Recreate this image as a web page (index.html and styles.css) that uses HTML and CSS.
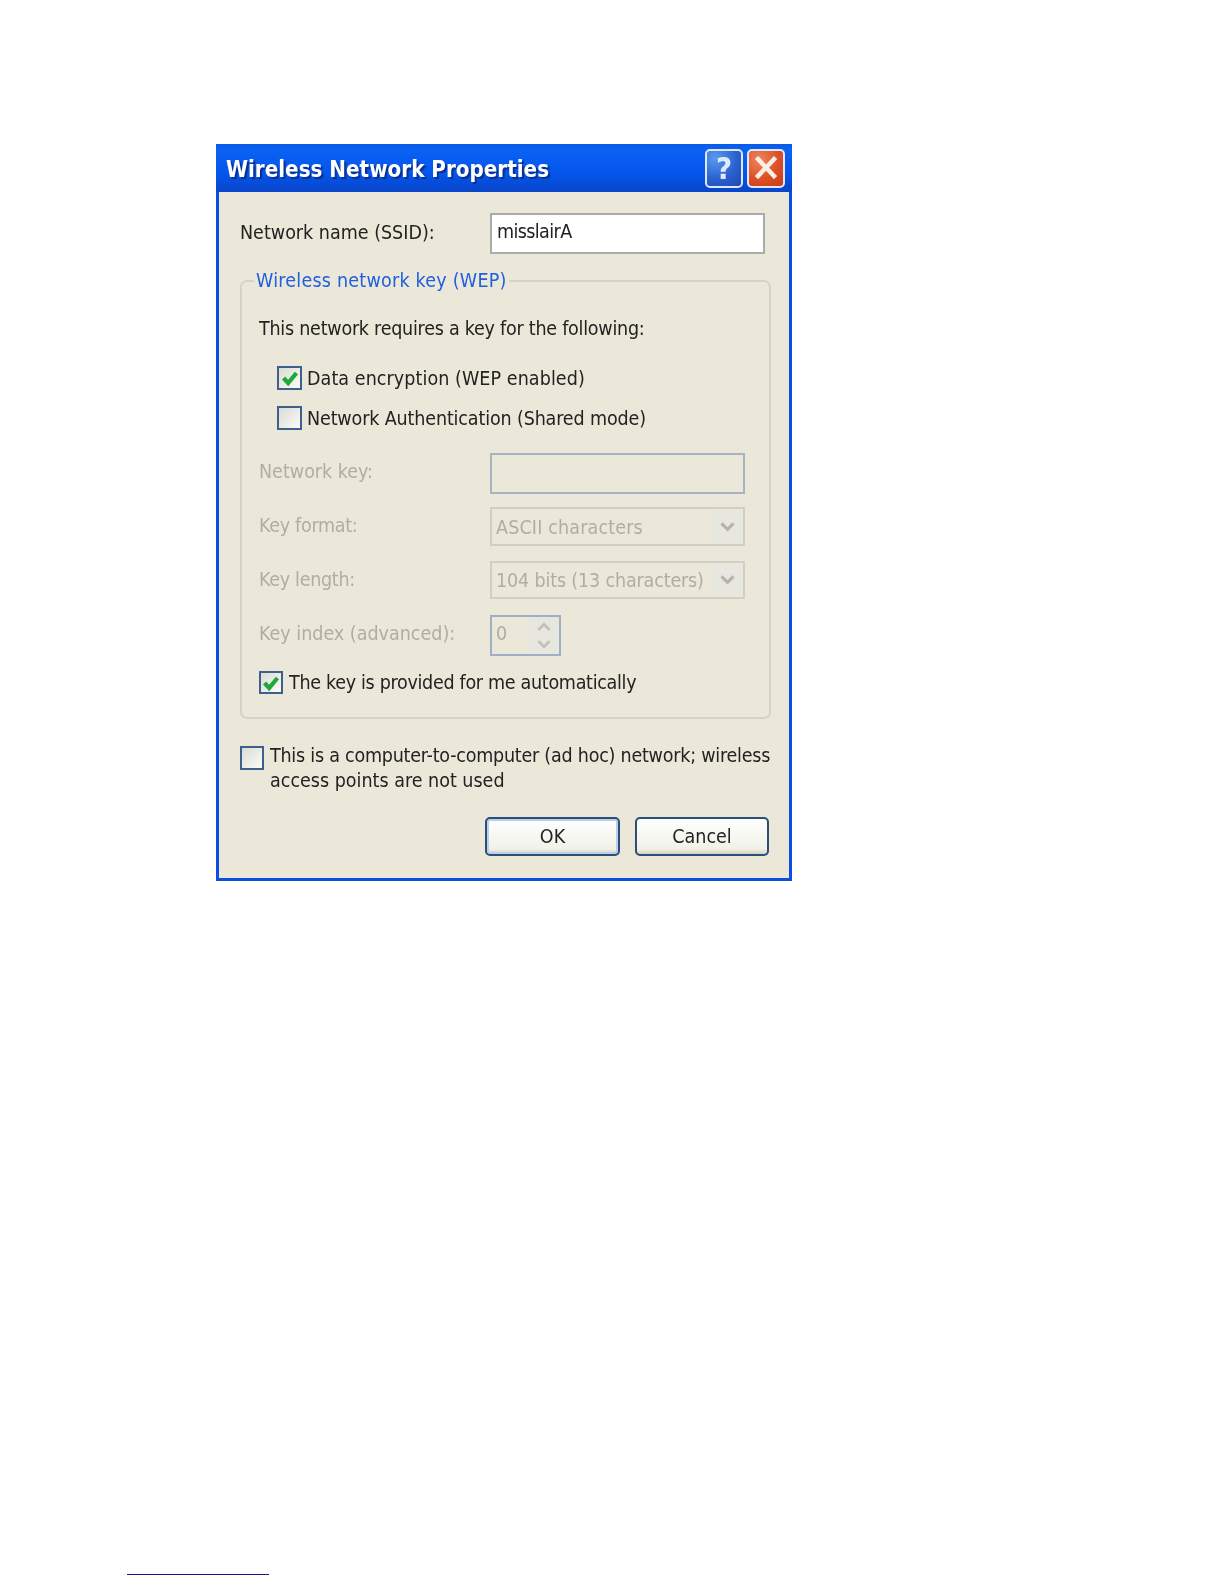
FILE: index.html
```html
<!DOCTYPE html>
<html lang="en">
<head>
<meta charset="utf-8">
<title>Wireless Network Properties</title>
<link rel="stylesheet" href="styles.css">
</head>
<body>
<main class="page">
  <section class="dialog">
    <header class="titlebar">
      <h1 class="title">Wireless Network Properties</h1>
      <div class="title-buttons">
        <span class="tbtn help">?</span>
        <span class="tbtn close"><svg viewBox="0 0 36 36" width="32" height="32"><path d="M9 8 L27 27 M27 8 L9 27" stroke="#fbeee6" stroke-width="5" stroke-linecap="square"/></svg></span>
      </div>
    </header>
    <div class="body">
      <div class="row ssid">
        <label class="lbl">Network name (SSID):</label>
        <div class="input ssid-input">misslairA</div>
      </div>
      <div class="group">
        <div class="legend">Wireless network key (WEP)</div>
        <p class="intro">This network requires a key for the following:</p>
        <div class="check-row indent first"><span class="cb"><svg viewBox="0 0 14 14"><path d="M2.5 7 L5.7 10.5 L11.5 3.5" fill="none" stroke="#21a83c" stroke-width="3"/></svg></span><span class="cap">Data encryption (WEP enabled)</span></div>
        <div class="check-row indent second"><span class="cb"></span><span class="cap">Network Authentication (Shared mode)</span></div>
        <div class="row dis key"><label class="lbl">Network key:</label><div class="input key-input"></div></div>
        <div class="row dis fmt"><label class="lbl">Key format:</label><div class="select"><span class="val">ASCII characters</span><span class="arrow"><svg viewBox="0 0 14 10"><path d="M2 2 L7 7 L12 2" fill="none" stroke="#b4b4aa" stroke-width="2.6"/></svg></span></div></div>
        <div class="row dis len"><label class="lbl">Key length:</label><div class="select"><span class="val">104 bits (13 characters)</span><span class="arrow"><svg viewBox="0 0 14 10"><path d="M2 2 L7 7 L12 2" fill="none" stroke="#b4b4aa" stroke-width="2.6"/></svg></span></div></div>
        <div class="row dis idx"><label class="lbl">Key index (advanced):</label><div class="spin"><span class="val">0</span><span class="spin-btns"><svg viewBox="0 0 14 8"><path d="M2 7 L7 2 L12 7" fill="none" stroke="#c0c0b8" stroke-width="2.4"/></svg><svg viewBox="0 0 14 8"><path d="M2 1 L7 6 L12 1" fill="none" stroke="#c0c0b8" stroke-width="2.4"/></svg></span></div></div>
        <div class="check-row auto"><span class="cb"><svg viewBox="0 0 14 14"><path d="M2.5 7 L5.7 10.5 L11.5 3.5" fill="none" stroke="#21a83c" stroke-width="3"/></svg></span><span>The key is provided for me automatically</span></div>
      </div>
      <div class="check-row adhoc"><span class="cb"></span><span class="adhoc-text">This is a computer-to-computer (ad hoc) network; wireless<br><span class="adhoc-second">access points are not used</span></span></div>
      <div class="actions">
        <button class="btn default">OK</button>
        <button class="btn">Cancel</button>
      </div>
    </div>
  </section>
  <div class="footnote-rule"></div>
</main>
</body>
</html>
```

FILE: styles.css
```css
* { box-sizing: border-box; }
html, body { margin: 0; background: #fff; }
body { width: 1224px; height: 1584px; overflow: hidden; font-family: "DejaVu Sans Condensed", "Liberation Sans", sans-serif; color: #222; }
.page { padding: 144px 0 0 216px; height: 1584px; position: relative; }
.dialog { width: 576px; height: 737px; background: #0c4ee0; display: flex; flex-direction: column; filter: blur(0.4px); }
.titlebar { height: 48px; flex: none; display: flex; align-items: center; justify-content: space-between; padding: 0 7px 0 10px; background: linear-gradient(180deg, #0a5ae6 0%, #0a62f4 12%, #0556ec 60%, #0649d2 90%, #0a45c8 100%); }
.title { margin: 0; padding-top: 2px; font-size: 22.2px; font-weight: 700; color: #fff; text-shadow: 2px 2px 1px #0a2f90; white-space: nowrap; }
.title-buttons { display: flex; gap: 4px; }
.tbtn { width: 38px; height: 39px; border: 2px solid #dfe8f8; border-radius: 5px; display: flex; align-items: center; justify-content: center; }
.help { background: radial-gradient(circle at 25% 20%, #5a9af0, #2b62d0 55%, #1f48b4); color: #dfeafc; font-size: 31px; font-weight: 700; }
.close { background: radial-gradient(circle at 30% 25%, #ee8560, #dd4f25 55%, #c83c16); }
.body { margin: 0 3px 3px 3px; flex: 1; background: #ebe8d9; padding: 21px 0 0 21px; font-size: 19.5px; line-height: 24px; }
.row { display: flex; align-items: center; }
.lbl { width: 250px; flex: none; white-space: nowrap; }
.ssid .lbl { padding-bottom: 2px; }
.input { height: 41px; background: #fff; border: 2px solid #a9acab; padding: 5px 5px 0; }
.ssid-input { width: 275px; letter-spacing: -0.6px; }
.group { margin-top: 26px; padding: 34px 0 0 17px; width: 531px; height: 439px; border: 2px solid #d6d3c5; border-radius: 7px; position: relative; }
.legend { color: #1f5fe0; padding: 0 2px; position: absolute; top: -13px; left: 12px; background: #ebe8d9; white-space: nowrap; letter-spacing: 0.23px; }
.intro { margin: 0; padding-top: 1px; height: 24px; white-space: nowrap; letter-spacing: -0.24px; }
.check-row { display: flex; align-items: center; white-space: nowrap; }
.cb { width: 25px; height: 24px; flex: none; border: 2px solid #3f5f8c; background: linear-gradient(135deg, #dcdcd4, #fbfbf8); margin-right: 5px; display: inline-flex; align-items: center; justify-content: center; }
.cb svg { width: 20px; height: 20px; }
.indent { margin-left: 18px; height: 24px; }
.cap { padding-top: 2px; }
.first { margin-top: 26px; letter-spacing: 0.07px; }
.second { margin-top: 16px; letter-spacing: -0.14px; }
.dis { color: #aeaea2; }
.dis .lbl { width: 231px; padding-bottom: 4px; }
.fmt .lbl, .len .lbl { letter-spacing: -0.3px; padding-bottom: 1px; }
.key { margin-top: 23px; }
.fmt { margin-top: 13px; }
.len { margin-top: 15px; }
.idx { margin-top: 16px; }
.key-input { width: 255px; background: #ebe8d9; border-color: #a7b3c0; }
.select { width: 255px; border: 2px solid #d0cfc2; display: flex; align-items: center; justify-content: space-between; padding-left: 4px; white-space: nowrap; }
.val { padding-top: 2px; }
.len .val { letter-spacing: -0.15px; }
.fmt .val { letter-spacing: 0.15px; }
.fmt .select { height: 39px; }
.len .select { height: 38px; }
.arrow { width: 30px; height: 32px; margin-right: 1px; background: #e7e6df; display: flex; align-items: center; justify-content: center; }
.arrow svg { width: 17px; height: 12px; }
.spin { width: 71px; height: 41px; border: 2px solid #9fb0c6; display: flex; align-items: center; justify-content: space-between; padding-left: 4px; }
.spin .val { padding: 0 0 4px; }
.spin-btns { width: 30px; height: 37px; background: #e7e6df; display: flex; flex-direction: column; align-items: center; justify-content: space-around; }
.spin-btns svg { width: 16px; height: 9px; }
.auto { margin-top: 15px; height: 23px; letter-spacing: -0.3px; }
.auto .cb { height: 23px; width: 24px; margin-right: 6px; }
.adhoc { margin-top: 25px; align-items: flex-start; letter-spacing: -0.23px; }
.adhoc .cb { margin-top: 2px; width: 24px; margin-right: 6px; }
.adhoc-second { position: relative; top: 1px; letter-spacing: 0; }
.actions { display: flex; justify-content: flex-end; gap: 15px; width: 529px; margin-top: 25px; }
.btn { width: 134px; height: 39px; border: 2px solid #2a4f78; border-radius: 5px; background: linear-gradient(180deg, #fff, #f2f1e8 85%, #d6d2c0); font: inherit; color: #222; padding: 0; }
.default { width: 135px; box-shadow: inset 0 0 0 2px #b8d0ee; }
.footnote-rule { position: absolute; left: 127px; top: 1574px; width: 142px; height: 1px; background: #15158a; }
```
